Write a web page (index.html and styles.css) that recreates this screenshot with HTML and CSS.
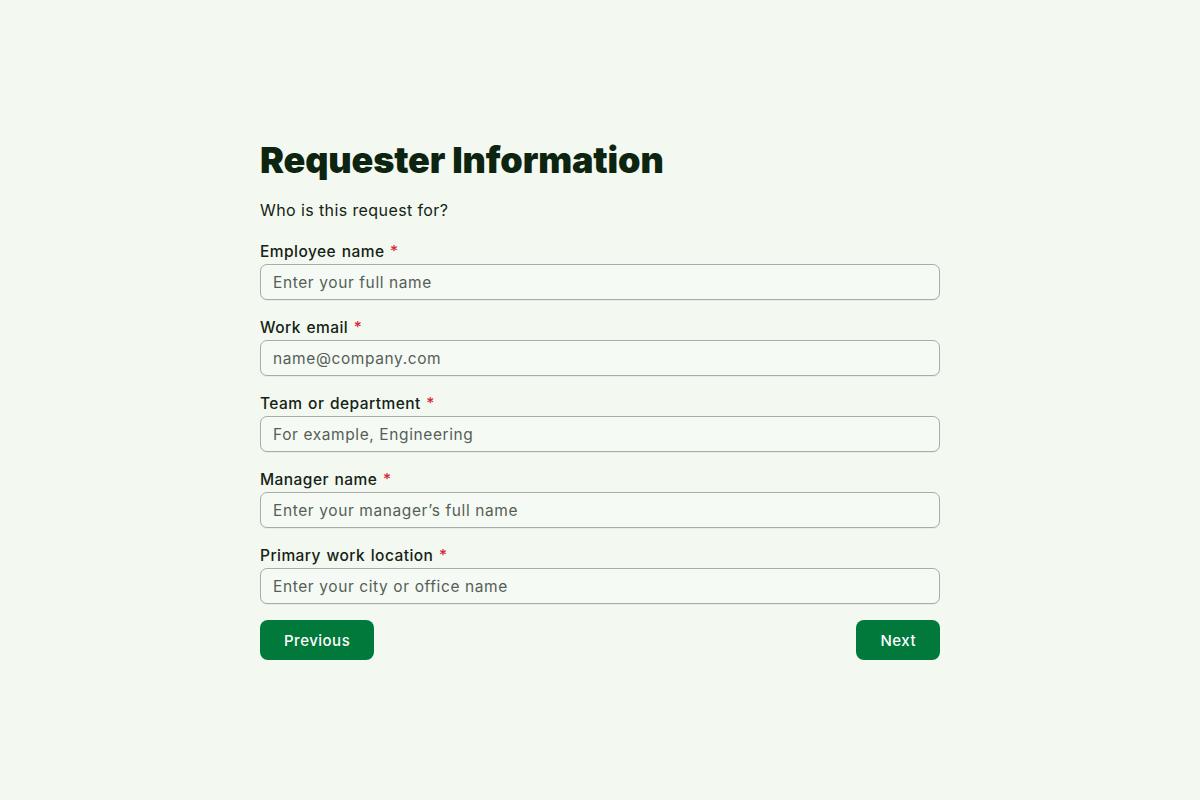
FILE: index.html
```html
<!DOCTYPE html>
<html lang="en">
<head>
<meta charset="utf-8">
<title>Requester Information</title>
<link rel="stylesheet" href="styles.css">
</head>
<body>
<main class="page">
  <form class="form">
    <h1 class="title">Requester Information</h1>
    <p class="subtitle">Who is this request for?</p>
    <div class="field">
      <label class="label" for="f1">Employee name <span class="req">*</span></label>
      <input class="input" id="f1" type="text" placeholder="Enter your full name">
    </div>
    <div class="field">
      <label class="label" for="f2">Work email <span class="req">*</span></label>
      <input class="input" id="f2" type="text" placeholder="name@company.com">
    </div>
    <div class="field">
      <label class="label" for="f3">Team or department <span class="req">*</span></label>
      <input class="input" id="f3" type="text" placeholder="For example, Engineering">
    </div>
    <div class="field">
      <label class="label" for="f4">Manager name <span class="req">*</span></label>
      <input class="input" id="f4" type="text" placeholder="Enter your manager’s full name">
    </div>
    <div class="field">
      <label class="label" for="f5">Primary work location <span class="req">*</span></label>
      <input class="input" id="f5" type="text" placeholder="Enter your city or office name">
    </div>
    <div class="actions">
      <button class="btn" type="button">Previous</button>
      <button class="btn" type="button">Next</button>
    </div>
  </form>
</main>
</body>
</html>
```

FILE: styles.css
```css
* { box-sizing: border-box; }
html, body { margin: 0; padding: 0; }
body {
  background: #f3f8f1;
  font-family: Inter, "Open Sans", "Liberation Sans", sans-serif;
  color: #142314;
}
.page {
  min-height: 800px;
  display: flex;
  justify-content: center;
  padding-top: 138px;
}
.form {
  width: 680px;
  display: flex;
  flex-direction: column;
}
.title {
  margin: 0;
  font-size: 36px;
  line-height: 44px;
  font-weight: 900;
  color: #0c2410;
  letter-spacing: -0.15px;
}
.subtitle {
  margin: 16px 0 18px;
  font-size: 16px;
  line-height: 24px;
  letter-spacing: 0.4px;
  color: #142314;
}
.field {
  display: flex;
  flex-direction: column;
  gap: 2px;
  margin-bottom: 16px;
}
.label {
  padding-top: 2px;
  font-size: 15.5px;
  line-height: 20px;
  font-weight: 500;
  letter-spacing: 0.45px;
  word-spacing: 1px;
  color: #142314;
}
.req { color: #d7263d; }
.input {
  height: 36px;
  border: 1px solid #a6aea6;
  border-radius: 7px;
  background: #f6faf5;
  padding: 0 12px;
  font-family: inherit;
  font-size: 15.5px;
  letter-spacing: 0.6px;
  color: #142314;
  box-shadow: 0 1px 1px rgba(0,0,0,0.05);
}
.input::placeholder { color: #555f55; }
.actions {
  display: flex;
  justify-content: space-between;
}
.btn {
  height: 40px;
  padding: 0 24px;
  border: none;
  border-radius: 8px;
  background: #00793b;
  color: #ffffff;
  font-family: inherit;
  font-size: 15px;
  font-weight: 500;
  letter-spacing: 0.5px;
}
```
